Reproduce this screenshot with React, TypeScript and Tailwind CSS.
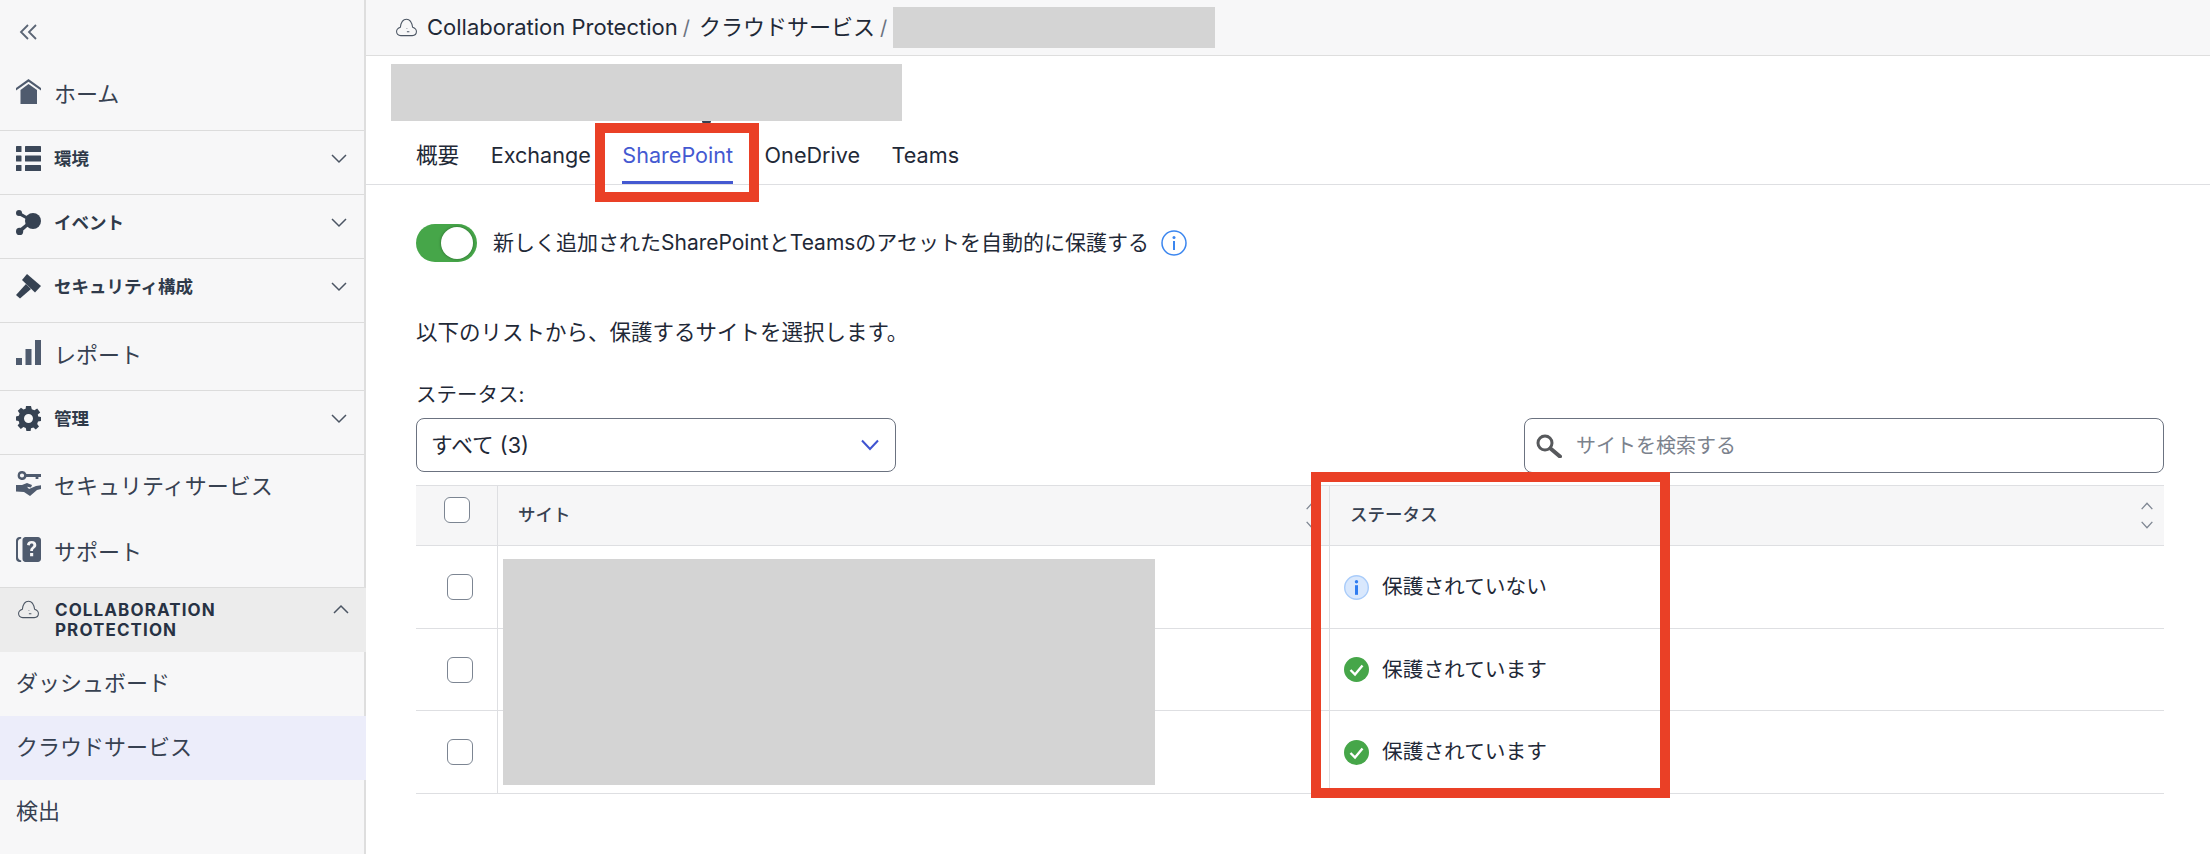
import React from "react";

const FONT = "[font-family:Inter,'Noto_Sans_CJK_JP',sans-serif]";

function Chevron({ up = false, className = "" }: { up?: boolean; className?: string }) {
  return (
    <svg viewBox="0 0 16 10" className={`w-[16px] h-[10px] ${className}`} fill="none" stroke="currentColor" strokeWidth="1.5">
      <path d={up ? "M1 9 L8 2 L15 9" : "M1 1 L8 8 L15 1"} />
    </svg>
  );
}

function Cloud({ className = "" }: { className?: string }) {
  return (
    <svg viewBox="0 0 22 19" className={className} fill="none" stroke="currentColor" strokeWidth="1.1">
      <path d="M5 18 C2.2 18 0.6 16 0.6 13.8 C0.6 11.6 2.2 10 4.6 9.2 C5.2 4 7.8 0.8 11 0.8 C14.2 0.8 16.6 4 17.4 9.2 C19.8 10 21.4 11.6 21.4 13.8 C21.4 16 19.8 18 17 18 Z" />
      <path d="M11.4 10.6 L11.4 11.2 M11.4 14 L14 14" />
    </svg>
  );
}

const HomeIcon = () => (
  <svg viewBox="0 0 25 25" className="w-[25px] h-[25px] text-[#4f5b6e]" fill="currentColor">
    <path d="M12.5 0 L25 9 L25 11.4 L12.5 2.8 L0 11.4 L0 9 Z" />
    <path d="M12.5 5 L21 11 L21 25 L4.5 25 L4.5 11 Z" />
  </svg>
);
const ListIcon = () => (
  <svg viewBox="0 0 25 25" className="w-[25px] h-[25px] text-[#3c4859]" fill="currentColor">
    <rect x="0" y="0" width="5.5" height="6" rx="0.6" />
    <rect x="9" y="0" width="16" height="6" rx="0.6" />
    <rect x="0" y="9.5" width="5.5" height="6" rx="0.6" />
    <rect x="9" y="9.5" width="16" height="6" rx="0.6" />
    <rect x="0" y="19" width="5.5" height="6" rx="0.6" />
    <rect x="9" y="19" width="16" height="6" rx="0.6" />
  </svg>
);
const EventIcon = () => (
  <svg viewBox="0 0 25 25" className="w-[25px] h-[25px] text-[#364252]" fill="currentColor">
    <circle cx="17" cy="11" r="8" />
    <circle cx="3" cy="3" r="3" />
    <circle cx="3.6" cy="21.4" r="3.6" />
    <path d="M3 1.6 L14 8 L12.6 10.6 L1.6 4.4 Z" />
    <path d="M2.6 19.6 L12 12 L14 14.6 L5 22.6 Z" />
  </svg>
);
const GavelIcon = () => (
  <svg viewBox="0 0 25 25" className="w-[25px] h-[25px] text-[#364252]" fill="currentColor">
    <path d="M11 0 L25 12 L19 18.4 L6 6 Z" />
    <path d="M10 10 L15 15 L4 24.6 L0 21 Z" />
  </svg>
);
const GearIcon = () => (
  <svg viewBox="0 0 25 25" className="w-[25px] h-[25px] text-[#364252]" fill="currentColor">
    <path fillRule="evenodd" d="M10 0 L15 0 L15.8 3.2 L18.4 4.3 L21.2 2.6 L24.2 6.4 L21.8 8.6 L22.2 10.6 L25 11 L25 15 L22 15.6 L21.2 18 L23 20.6 L19.8 23.4 L17.4 21.4 L15 22.2 L14.6 25 L10.4 25 L9.8 22 L7.4 21 L4.8 23 L1.6 19.6 L3.4 17.2 L2.6 15 L0 14.4 L0 10.4 L2.8 9.8 L3.6 7.4 L1.8 4.8 L5 1.8 L7.4 3.6 L9.6 2.8 Z M12.5 8 A4.5 4.5 0 1 0 12.5 17 A4.5 4.5 0 1 0 12.5 8 Z" />
  </svg>
);
const BarsIcon = () => (
  <svg viewBox="0 0 25 25" className="w-[25px] h-[25px] text-[#4f5b6e]" fill="currentColor">
    <rect x="0" y="18" width="6" height="7" />
    <rect x="9.5" y="9" width="6" height="16" />
    <rect x="19" y="0" width="6" height="25" />
  </svg>
);
const KeyHandIcon = () => (
  <svg viewBox="0 0 25 25" className="w-[25px] h-[25px] text-[#4f5b6e]" fill="currentColor">
    <path fillRule="evenodd" d="M6 0 A4.5 4.5 0 0 1 10.4 3 L25 3 L25 6 L22.4 6 L22.4 8 L19.6 8 L19.6 6 L10.4 6 A4.5 4.5 0 1 1 6 0 Z M6 2.4 A2.1 2.1 0 1 0 6 6.6 A2.1 2.1 0 1 0 6 2.4 Z" />
    <path d="M0 14 L6 14 L11 12 L16 14 L15 16.4 L11 15.8 L13 18 L20 15 L25 14.2 L25 18 L21 19 L14 25 L8 21 L0 20.4 Z" />
  </svg>
);
const SupportIcon = () => (
  <svg viewBox="0 0 25 25" className="w-[25px] h-[25px] text-[#4f5b6e]" fill="currentColor">
    <path d="M3.6 0 L5.2 0 L5.2 1.6 C3.4 2 2 3 2 5 L2 20 C2 22 3.4 23 5.2 23.4 L5.2 25 L3.6 25 C1.6 25 0 23.4 0 21.4 L0 3.6 C0 1.6 1.6 0 3.6 0 Z" />
    <path fillRule="evenodd" d="M9.5 0 L22 0 C23.6 0 25 1.4 25 3 L25 22 C25 23.6 23.6 25 22 25 L9.5 25 C7.9 25 6.5 23.6 6.5 22 L6.5 3 C6.5 1.4 7.9 0 9.5 0 Z M15.8 4 C12.8 4 11.2 5.6 11 8 L13.8 8.4 C14 7.2 14.6 6.6 15.7 6.6 C16.8 6.6 17.4 7.2 17.4 8.1 C17.4 9 16.8 9.5 15.9 10.2 C14.6 11.2 14.2 12.2 14.2 14 L17 14 C17 12.8 17.3 12.3 18.2 11.6 C19.5 10.6 20.3 9.7 20.3 8 C20.3 5.6 18.5 4 15.8 4 Z M14.1 16 L14.1 19.2 L17.2 19.2 L17.2 16 Z" />
  </svg>
);

function NavRow({ icon, label, h, bold = false, chevron = false, border = true }: { icon: React.ReactNode; label: string; h: string; bold?: boolean; chevron?: boolean; border?: boolean }) {
  return (
    <div className={`flex items-center pl-[16px] pr-[17px] pb-[8px] ${h} ${border ? "border-b border-[#dcdcdc]" : ""}`}>
      <div className="w-[25px] h-[25px] shrink-0 flex items-center justify-center">{icon}</div>
      <span className={`ml-[13px] flex-1 ${bold ? "pt-[2px] text-[17.5px] font-bold text-[#2f3a4a]" : "pt-[6px] text-[22px] text-[#374151]"}`}>{label}</span>
      {chevron && <Chevron className="text-[#4b5563]" />}
    </div>
  );
}

function SubRow({ label, active = false }: { label: string; active?: boolean }) {
  return (
    <div className={`h-[64px] flex items-center pl-[16px] pb-[2px] text-[22px] text-[#374151] ${active ? "bg-[#ecedfa]" : ""}`}>{label}</div>
  );
}

function Sidebar() {
  return (
    <aside className="w-[366px] shrink-0 h-[854px] bg-[#f7f7f8] border-r-2 border-[#dedede]">
      <div className="h-[60px] pl-[19px] pt-[24px]">
        <svg viewBox="0 0 18 16" className="w-[18px] h-[16px] text-[#5b6575]" fill="none" stroke="currentColor" strokeWidth="1.8">
          <path d="M9 1 L2 8 L9 15 M17 1 L10 8 L17 15" />
        </svg>
      </div>
      <NavRow h="h-[71px]" icon={<HomeIcon />} label="ホーム" />
      <NavRow h="h-[64px]" icon={<ListIcon />} label="環境" bold chevron />
      <NavRow h="h-[64px]" icon={<EventIcon />} label="イベント" bold chevron />
      <NavRow h="h-[64px]" icon={<GavelIcon />} label="セキュリティ構成" bold chevron />
      <NavRow h="h-[68px]" icon={<BarsIcon />} label="レポート" />
      <NavRow h="h-[64px]" icon={<GearIcon />} label="管理" bold chevron />
      <NavRow h="h-[64px]" icon={<KeyHandIcon />} label="セキュリティサービス" border={false} />
      <NavRow h="h-[69px]" icon={<SupportIcon />} label="サポート" />
      <div className="h-[64px] -mr-[2px] bg-[#ececec] flex items-start pl-[18px] pr-[17px] pt-[12px]">
        <Cloud className="w-[21px] h-[19px] text-[#4b5563]" />
        <span className="ml-[16px] flex-1 text-[17px] leading-[20px] font-bold tracking-[1.1px] text-[#273244]">
          COLLABORATION
          <br />
          PROTECTION
        </span>
        <Chevron up className="text-[#4b5563] mt-[4px]" />
      </div>
      <SubRow label="ダッシュボード" />
      <div className="-mr-[2px]">
        <SubRow label="クラウドサービス" active />
      </div>
      <SubRow label="検出" />
    </aside>
  );
}

function Checkbox({ className = "" }: { className?: string }) {
  return <div className={`w-[26px] h-[26px] rounded-[6px] border border-[#7c8592] bg-white ${className}`} />;
}

function Sort({ className = "" }: { className?: string }) {
  return (
    <div className={`flex flex-col gap-[11px] text-[#7f8793] ${className}`}>
      <svg viewBox="0 0 14 9" className="w-[14px] h-[8px]" fill="none" stroke="currentColor" strokeWidth="1.5"><path d="M1 8 L7 1.5 L13 8" /></svg>
      <svg viewBox="0 0 14 9" className="w-[14px] h-[8px]" fill="none" stroke="currentColor" strokeWidth="1.5"><path d="M1 1 L7 7.5 L13 1" /></svg>
    </div>
  );
}

function StatusIcon({ ok }: { ok: boolean }) {
  if (ok) {
    return (
      <svg viewBox="0 0 25 25" className="w-[25px] h-[25px] shrink-0">
        <circle cx="12.5" cy="12.5" r="12.5" fill="#46a649" />
        <path d="M6.5 13 L11 17.5 L18.5 8.5" fill="none" stroke="#fff" strokeWidth="2.4" />
      </svg>
    );
  }
  return (
    <svg viewBox="0 0 25 25" className="w-[25px] h-[25px] shrink-0">
      <circle cx="12.5" cy="12.5" r="11.8" fill="#d9e8fd" stroke="#a9ccfa" strokeWidth="1.4" />
      <circle cx="12.5" cy="6.8" r="1.7" fill="#2f7cf0" />
      <rect x="11" y="10.2" width="3" height="9.6" fill="#2f7cf0" />
    </svg>
  );
}

function Row({ ok, label, h }: { ok: boolean; label: string; h: string }) {
  return (
    <div className={`flex border-b border-[#dedfe2] ${h}`}>
      <div className="w-[82px] shrink-0 border-r border-[#dedfe2] flex items-center pl-[31px]">
        <Checkbox />
      </div>
      <div className="w-[832px] shrink-0 border-r border-[#dedfe2]" />
      <div className="flex-1 flex items-center pl-[14px]">
        <StatusIcon ok={ok} />
        <span className="ml-[13px] text-[20.7px] text-[#1f2937]">{label}</span>
      </div>
    </div>
  );
}

function Tab({ label, active = false }: { label: string; active?: boolean }) {
  return (
    <div className={`h-[63px] flex items-center pt-[9px] border-b-[3px] text-[21.6px] ${active ? "border-[#4459d1] text-[#4459d1]" : "border-transparent text-[#1f2937]"}`}>
      {label}
    </div>
  );
}

function Main() {
  return (
    <main className="relative flex-1 min-w-0 h-[854px] bg-white">
      <div className="h-[56px] bg-[#f7f7f8] border-b border-[#dedede] flex items-center pl-[30px] text-[#1f2937] text-[22px]">
        <Cloud className="w-[21px] h-[19px] text-[#4b5563] mr-[10px]" />
        <span>Collaboration Protection</span>
        <span className="ml-[5px] text-[#6b7280] text-[20px]">/</span>
        <span className="ml-[9px]">クラウドサービス</span>
        <span className="ml-[5px] text-[#6b7280] text-[20px]">/</span>
        <div className="ml-[6px] w-[322px] h-[41px] bg-[#d4d4d4]" />
      </div>

      <div className="relative mt-[8px] ml-[25px] w-[511px] h-[57px] bg-[#d4d4d4]">
        <div className="absolute left-[311px] top-[57px] w-[9px] h-[3px] rounded-b-full bg-[#374151]" />
      </div>

      <div className="h-[64px] border-b border-[#dedfe2] flex items-end pl-[50px] gap-[31.5px]">
        <Tab label="概要" />
        <Tab label="Exchange" />
        <Tab label="SharePoint" active />
        <Tab label="OneDrive" />
        <Tab label="Teams" />
      </div>

      <div className="pl-[50px] pr-[46px]">
        <div className="mt-[39px] flex items-center h-[38px]">
          <div className="relative w-[61px] h-[38px] rounded-full bg-[#46a649]">
            <div className="absolute right-[4px] top-[3px] w-[32px] h-[32px] rounded-full bg-white shadow-[0_0_3px_rgba(0,0,0,0.4)]" />
          </div>
          <span className="ml-[16px] text-[21px] text-[#1f2937]">新しく追加されたSharePointとTeamsのアセットを自動的に保護する</span>
          <svg viewBox="0 0 26 26" className="w-[26px] h-[26px] ml-[12px]">
            <circle cx="13" cy="13" r="12" fill="#fff" stroke="#3b86ef" strokeWidth="1.5" />
            <circle cx="13" cy="7.6" r="1.5" fill="#3b86ef" />
            <rect x="12" y="11" width="2" height="9" fill="#3b86ef" />
          </svg>
        </div>

        <p className="mt-[55px] text-[21.5px] leading-[30px] text-[#1f2937]">以下のリストから、保護するサイトを選択します。</p>

        <p className="mt-[33px] text-[20.5px] leading-[30px] text-[#1f2937]">ステータス:</p>

        <div className="mt-[8px] flex items-start justify-between">
          <div className="w-[480px] h-[54px] rounded-[8px] border border-[#6b7280] flex items-center justify-between pl-[14px] pr-[16px] text-[21.7px] text-[#1f2937]">
            <span>すべて (3)</span>
            <svg viewBox="0 0 18 12" className="w-[18px] h-[12px] text-[#3f54d1]" fill="none" stroke="currentColor" strokeWidth="2">
              <path d="M1 1.5 L9 10 L17 1.5" />
            </svg>
          </div>
          <div className="w-[640px] h-[55px] rounded-[8px] border border-[#6b7280] flex items-center pl-[11px] text-[20px] text-[#7b828d]">
            <svg viewBox="0 0 26 24" className="w-[26px] h-[24px] text-[#57595c]" fill="none" stroke="currentColor">
              <circle cx="9" cy="9" r="7" strokeWidth="3" />
              <path d="M14.5 14.5 L24 22.5" strokeWidth="4" strokeLinecap="round" />
            </svg>
            <span className="ml-[14px]">サイトを検索する</span>
          </div>
        </div>

        <div className="relative mt-[12px]">
          <div className="flex h-[61px] bg-[#f6f6f7] border-y border-[#dedfe2]">
            <div className="w-[82px] shrink-0 border-r border-[#dedfe2] pl-[28px] pt-[11px]">
              <Checkbox />
            </div>
            <div className="w-[832px] shrink-0 border-r border-[#dedfe2] flex items-center justify-between pl-[20px] pr-[10px]">
              <span className="text-[17.5px] font-medium text-[#374151]">サイト</span>
              <Sort />
            </div>
            <div className="flex-1 flex items-center justify-between pl-[20px] pr-[10px]">
              <span className="text-[17.5px] font-medium text-[#374151]">ステータス</span>
              <Sort />
            </div>
          </div>
          <Row h="h-[83px]" ok={false} label="保護されていない" />
          <Row h="h-[82px]" ok label="保護されています" />
          <Row h="h-[83px]" ok label="保護されています" />
          <div className="absolute left-[87px] top-[74px] w-[652px] h-[226px] bg-[#d4d4d4]" />
        </div>
      </div>

      <div className="absolute left-[229px] top-[123px] w-[164px] h-[79px] border-[10px] border-[#ea4026]" />
      <div className="absolute left-[945px] top-[472px] w-[359px] h-[326px] border-[10px] border-[#ea4026]" />
    </main>
  );
}

export default function App() {
  return (
    <div className={`flex w-[2210px] h-[854px] overflow-hidden bg-white ${FONT}`}>
      <Sidebar />
      <Main />
    </div>
  );
}
